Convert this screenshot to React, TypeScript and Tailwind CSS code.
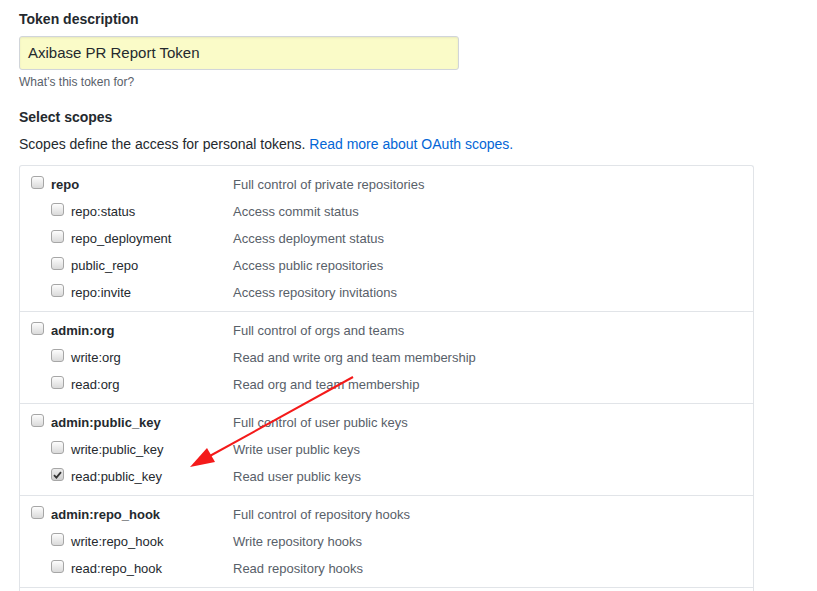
import { useState } from 'react';

interface Scope {
  name: string;
  description: string;
  checked?: boolean;
  children: { name: string; description: string; checked?: boolean }[];
}

const SCOPES: Scope[] = [
  {
    name: 'repo',
    description: 'Full control of private repositories',
    children: [
      { name: 'repo:status', description: 'Access commit status' },
      { name: 'repo_deployment', description: 'Access deployment status' },
      { name: 'public_repo', description: 'Access public repositories' },
      { name: 'repo:invite', description: 'Access repository invitations' },
    ],
  },
  {
    name: 'admin:org',
    description: 'Full control of orgs and teams',
    children: [
      { name: 'write:org', description: 'Read and write org and team membership' },
      { name: 'read:org', description: 'Read org and team membership' },
    ],
  },
  {
    name: 'admin:public_key',
    description: 'Full control of user public keys',
    children: [
      { name: 'write:public_key', description: 'Write user public keys' },
      { name: 'read:public_key', description: 'Read user public keys', checked: true },
    ],
  },
  {
    name: 'admin:repo_hook',
    description: 'Full control of repository hooks',
    children: [
      { name: 'write:repo_hook', description: 'Write repository hooks' },
      { name: 'read:repo_hook', description: 'Read repository hooks' },
    ],
  },
];

function Checkbox({ checked }: { checked?: boolean }) {
  return (
    <span
      className={`relative -mt-[4px] flex h-[13px] w-[13px] shrink-0 items-center justify-center rounded-[3px] border border-[#a6a6a6] bg-gradient-to-b ${
        checked ? 'from-[#ececec] to-[#cfcfcf]' : 'from-[#fdfdfd] to-[#dadada]'
      }`}
    >
      {checked && (
        <svg width="9" height="8" viewBox="0 0 9 8">
          <path d="M1 4.2 L3.4 6.6 L8 1.2" fill="none" stroke="#333" strokeWidth="1.8" />
        </svg>
      )}
    </span>
  );
}

function ScopeRow({ name, description, checked, sub }: { name: string; description: string; checked?: boolean; sub?: boolean }) {
  return (
    <div className="flex h-[27px] items-center text-[13px]">
      <div className={`flex w-[213px] items-center gap-[7px] ${sub ? 'pl-[31px]' : 'pl-[11px]'}`}>
        <Checkbox checked={checked} />
        <span className={sub ? 'text-[#24292e]' : 'font-bold text-[#24292e]'}>{name}</span>
      </div>
      <div className="text-[#586069]">{description}</div>
    </div>
  );
}

export default function App() {
  const [token] = useState('Axibase PR Report Token');

  return (
    <div className="relative min-h-[591px] bg-white px-[19px] pt-[9px]" style={{ fontFamily: '"Liberation Sans", Arial, sans-serif' }}>
      {/* token description */}
      <div className="text-[14px] font-bold leading-[21px] text-[#24292e]">Token description</div>
      <div className="mt-[6px] flex h-[34px] w-[440px] items-center rounded-[3px] border border-[#d1d5da] bg-[#fafbc8] px-[8px] text-[15px] text-[#24292e] shadow-[inset_0_1px_2px_rgba(27,31,35,0.075)]">
        {token}
      </div>
      <div className="mt-[3px] text-[12px] leading-[18px] text-[#586069]">What’s this token for?</div>

      {/* scopes */}
      <div className="mt-[16px] text-[14px] font-bold leading-[21px] text-[#24292e]">Select scopes</div>
      <p className="mt-[6px] text-[14px] leading-[21px] text-[#24292e]">
        Scopes define the access for personal tokens.{' '}
        <span className="text-[#0366d6]">Read more about OAuth scopes.</span>
      </p>

      <div className="mt-[10px] w-[735px] rounded-t-[3px] border-x border-t border-[#e1e4e8]">
        {SCOPES.map(scope => (
          <div key={scope.name} className="border-b border-[#e1e4e8] py-[5px]">
            <ScopeRow name={scope.name} description={scope.description} checked={scope.checked} />
            {scope.children.map(child => (
              <ScopeRow key={child.name} name={child.name} description={child.description} checked={child.checked} sub />
            ))}
          </div>
        ))}
        <div className="h-[10px]" />
      </div>

      {/* annotation arrow */}
      <svg className="pointer-events-none absolute left-0 top-0" width="817" height="591">
        <line x1="353" y1="377" x2="208" y2="457" stroke="#f41a1a" strokeWidth="2" />
        <polygon points="190,467 215,462 207,448" fill="#f41a1a" />
      </svg>
    </div>
  );
}
